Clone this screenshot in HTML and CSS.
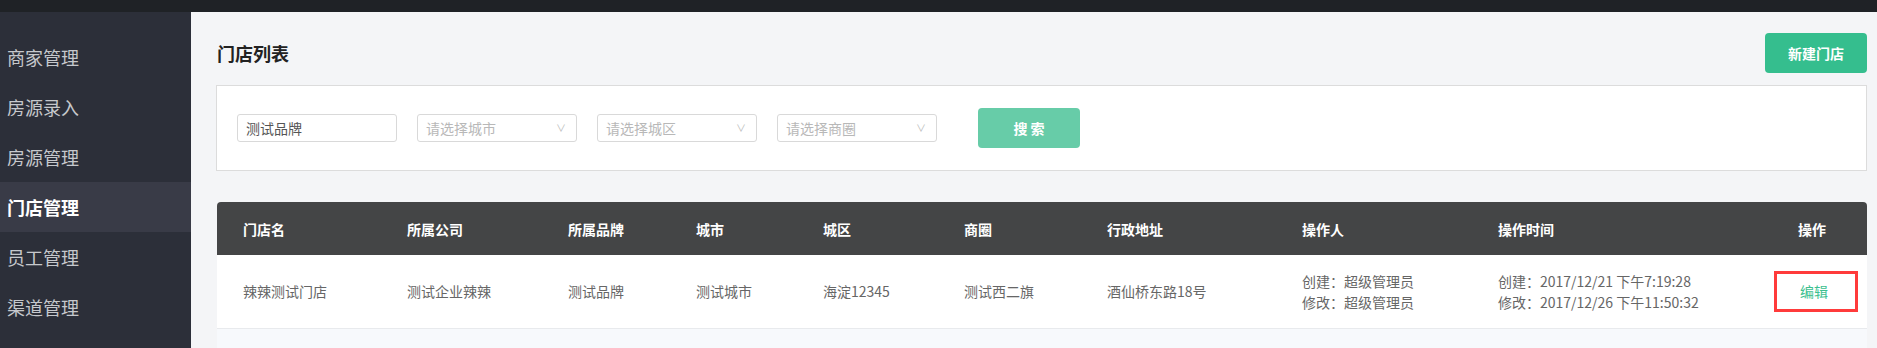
FILE: index.html
```html
<!DOCTYPE html>
<html lang="zh-CN">
<head>
	<meta charset="utf-8">
	<meta name="viewport" content="width=device-width, initial-scale=1">
	<title>门店列表</title>
	<link rel="stylesheet" href="styles.css">
</head>
<body>
	<div class="topbar"></div>
	<div class="layout">
		<ul class="sidebar">
			<li>商家管理</li>
			<li>房源录入</li>
			<li>房源管理</li>
			<li class="active">门店管理</li>
			<li>员工管理</li>
			<li>渠道管理</li>
		</ul>
		<div class="main">
			<div class="title-row">
				<h2>门店列表</h2>
				<button class="btn btn-new">新建门店</button>
			</div>
			<div class="filter">
				<div class="field">测试品牌</div>
				<div class="field select">请选择城市<span class="arrow">&#8744;</span></div>
				<div class="field select">请选择城区<span class="arrow">&#8744;</span></div>
				<div class="field select">请选择商圈<span class="arrow">&#8744;</span></div>
				<button class="btn btn-search">搜 索</button>
			</div>
			<div class="table">
				<div class="row head">
					<div>门店名</div>
					<div>所属公司</div>
					<div>所属品牌</div>
					<div>城市</div>
					<div>城区</div>
					<div>商圈</div>
					<div>行政地址</div>
					<div>操作人</div>
					<div>操作时间</div>
					<div class="op">操作</div>
				</div>
				<div class="row body">
					<div>辣辣测试门店</div>
					<div>测试企业辣辣</div>
					<div>测试品牌</div>
					<div>测试城市</div>
					<div>海淀12345</div>
					<div>测试西二旗</div>
					<div>酒仙桥东路18号</div>
					<div>创建：超级管理员<br>修改：超级管理员</div>
					<div>创建：2017/12/21 下午7:19:28<br>修改：2017/12/26 下午11:50:32</div>
					<div class="op"><a href="#" class="edit">编辑</a></div>
				</div>
				<div class="filler"></div>
			</div>
		</div>
	</div>
</body>
</html>
```

FILE: styles.css
```css
*{
	margin: 0;
	padding: 0;
	box-sizing: border-box;
}
body{
	font-family: "Noto Sans CJK SC", "Liberation Sans", sans-serif;
	background-color: #f4f5f7;
	color: #333;
	height: 348px;
	overflow: hidden;
}
.topbar{
	height: 12px;
	background-color: #1f2226;
}
.layout{
	display: flex;
	height: 336px;
}
.sidebar{
	list-style: none;
	width: 191px;
	background-color: #2c2f39;
	padding-top: 20px;
}
.sidebar li{
	height: 50px;
	line-height: 50px;
	padding-left: 7px;
	font-size: 18px;
	color: #c6c8cc;
}
.sidebar .active{
	background-color: #393b47;
	color: #fff;
	font-weight: bold;
}
.main{
	flex: 1;
	padding: 21px 10px 0 25px;
}
.title-row{
	display: flex;
	justify-content: space-between;
	align-items: center;
	height: 40px;
	padding-left: 1px;
}
.title-row h2{
	font-size: 18px;
	font-weight: bold;
	color: #222;
}
.btn{
	border: none;
	border-radius: 4px;
	width: 102px;
	height: 40px;
	color: #fff;
	font-family: inherit;
	font-size: 14px;
	font-weight: bold;
}
.btn-new{
	background-color: #35be8e;
}
.btn-search{
	background-color: #67cca8;
	margin-left: 21px;
}
.filter{
	margin-top: 12px;
	background-color: #fff;
	border: 1px solid #dcdcdc;
	padding: 22px 20px;
	display: flex;
	align-items: center;
	gap: 20px;
}
.field{
	width: 160px;
	height: 28px;
	border: 1px solid #d9d9d9;
	border-radius: 3px;
	padding-left: 8px;
	font-size: 14px;
	line-height: 26px;
	color: #555;
	position: relative;
}
.select{
	color: #b8b8b8;
}
.arrow{
	position: absolute;
	right: 10px;
	top: 0;
	font-size: 10px;
	color: #bdbdbd;
}
.table{
	margin-top: 31px;
	margin-left: 1px;
	border-radius: 4px 4px 0 0;
	overflow: hidden;
}
.row{
	display: grid;
	grid-template-columns: 164px 161px 128px 127px 141px 143px 195px 196px 1fr 120px;
	align-items: center;
	font-size: 14px;
}
.row > div{
	padding-left: 26px;
}
.row > .op{
	padding-left: 0;
	padding-right: 41px;
	text-align: right;
}
.head{
	height: 53px;
	background-color: #444546;
	color: #fff;
	font-weight: bold;
}
.body{
	height: 74px;
	background-color: #fff;
	color: #666;
	line-height: 21px;
	border-bottom: 1px solid #e8eaed;
}
.body > .op{
	padding-right: 9px;
}
.edit{
	display: inline-block;
	width: 84px;
	height: 41px;
	line-height: 35px;
	text-align: center;
	padding-right: 4px;
	border: 3px solid #ff3b3b;
	color: #3cbf8f;
	text-decoration: none;
}
.filler{
	height: 20px;
	background-color: #f7f9fc;
}
```
